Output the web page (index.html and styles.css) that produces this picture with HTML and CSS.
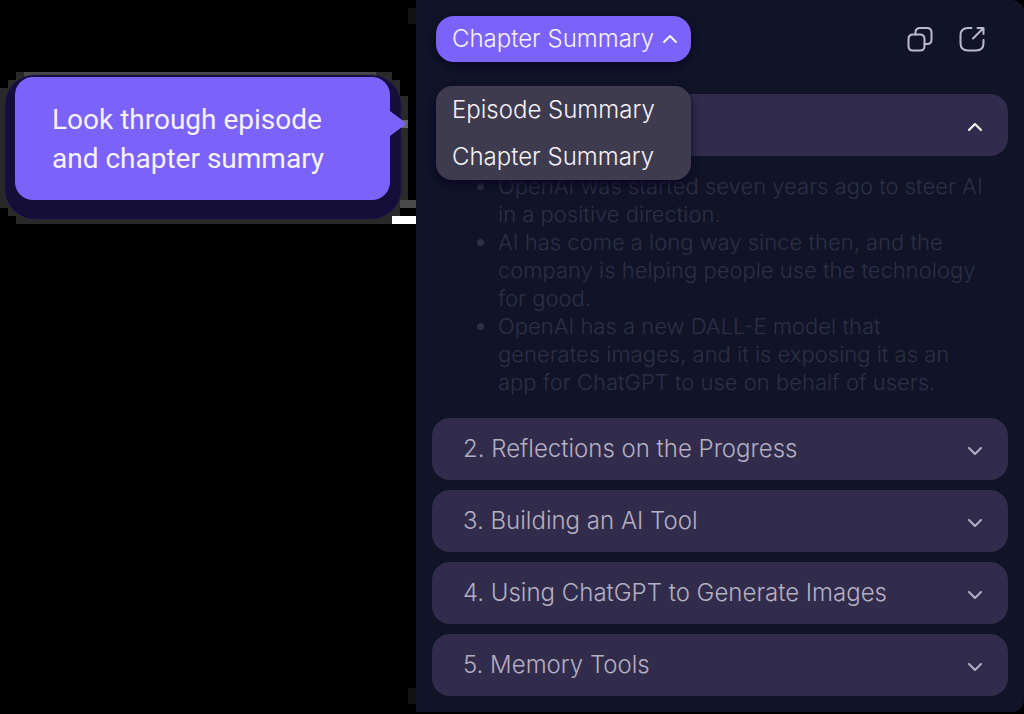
FILE: index.html
```html
<!DOCTYPE html>
<html lang="en">
<head>
<meta charset="utf-8">
<title>Chapter Summary</title>
<link rel="stylesheet" href="styles.css">
</head>
<body>
<main class="layout">
  <section class="intro">
    <svg class="halo" viewBox="0 0 416 712" aria-hidden="true">
      <path fill="#121212" d="M408 8H416V24H408ZM408 688H416V704H408Z"/>
      <path fill="#292929" d="M16 72H392V80H400V96H408V120H408V200H400V216H392V224H16V216H8V208H0V88H8V80H16Z"/>
      <path fill="#474747" d="M24 72H376V80H24Z"/>
      <path fill="#666" d="M400 120H408V128H400Z"/>
      <path fill="#4a4a4a" d="M400 200H416V208H400Z"/>
      <rect x="5" y="75" width="396" height="144" rx="30" fill="#150e38" stroke="#211c60" stroke-dasharray="3 2 1 2"/>
      <path fill="#fff" d="M392 216H416V224H392Z"/>
      <path fill="#7b62f9" d="M388 109L390 111L402 120Q409 124 402 127L390 136H388Z"/>
    </svg>
    <p class="callout">Look through episode<br>and chapter summary</p>
  </section>

  <section class="panel">
    <header class="toolbar">
      <div class="picker">
        <button class="picker-button" type="button" aria-expanded="true" aria-haspopup="menu">Chapter Summary
          <svg class="chevron" viewBox="0 0 16 10" aria-hidden="true"><path d="M2 8L8 2L14 8"/></svg>
        </button>
        <div class="menu" role="menu">
          <button class="menu-item" type="button" role="menuitem">Episode Summary</button>
          <button class="menu-item" type="button" role="menuitem">Chapter Summary</button>
        </div>
      </div>
      <div class="actions">
        <button class="icon-button" type="button" aria-label="Copy">
          <svg viewBox="0 0 28 28" aria-hidden="true"><path d="M2.500 14Q2.500 9.500 7 9.500H14Q18.500 9.500 18.500 14V21Q18.500 25.500 14 25.500H7Q2.500 25.500 2.500 21Z"/><path d="M9.500 9.500V7.500Q9.500 3 14 3H21Q25.500 3 25.500 7.500V14.500Q25.500 19 21 19H18.500"/></svg>
        </button>
        <button class="icon-button" type="button" aria-label="Open in new window">
          <svg viewBox="0 0 28 28" aria-hidden="true"><path d="M13.500 3H10Q2.500 3 2.500 10.500V18Q2.500 25.500 10 25.500H18Q25.500 25.500 25.500 18V15"/><path d="M15 13.500L25 3.500M19.500 3H25.500V9"/></svg>
        </button>
      </div>
    </header>

    <div class="chapters">
      <div class="chapter-open">
        <button class="chapter active" type="button" aria-expanded="true" aria-label="Collapse chapter">
          <span></span>
          <svg class="chevron" viewBox="0 0 16 10" aria-hidden="true"><path d="M2 8L8 2L14 8"/></svg>
        </button>
        <ul class="points">
          <li>OpenAI was started seven years ago to steer AI in a positive direction.</li>
          <li>AI has come a long way since then, and the company is helping people use the technology for good.</li>
          <li>OpenAI has a new DALL-E model that generates images, and it is exposing it as an app for ChatGPT to use on behalf of users.</li>
        </ul>
      </div>
      <button class="chapter" type="button"><span>2. Reflections on the Progress</span><svg class="chevron" viewBox="0 0 16 10" aria-hidden="true"><path d="M2 2L8 8L14 2"/></svg></button>
      <button class="chapter" type="button"><span>3. Building an AI Tool</span><svg class="chevron" viewBox="0 0 16 10" aria-hidden="true"><path d="M2 2L8 8L14 2"/></svg></button>
      <button class="chapter" type="button"><span>4. Using ChatGPT to Generate Images</span><svg class="chevron" viewBox="0 0 16 10" aria-hidden="true"><path d="M2 2L8 8L14 2"/></svg></button>
      <button class="chapter" type="button"><span>5. Memory Tools</span><svg class="chevron" viewBox="0 0 16 10" aria-hidden="true"><path d="M2 2L8 8L14 2"/></svg></button>
    </div>
  </section>
</main>
</body>
</html>
```
FILE: styles.css
```css
* {
  box-sizing: border-box;
}

body {
  margin: 0;
  background: #000;
  font-family: Inter, "Liberation Sans", sans-serif;
  font-weight: 300;
}

button {
  border: 0;
  font: inherit;
  cursor: pointer;
}

.layout {
  display: grid;
  grid-template-columns: 13fr 19fr;
}

.intro {
  position: relative;
  padding: 77px 26px 0 15px;
}

.halo {
  position: absolute;
  top: 0;
  left: 0;
  width: 100%;
}

.callout {
  position: relative;
  margin: 0;
  padding: 23px 36px 22px 37px;
  border-radius: 18px;
  background: #7b62f9;
  color: #f6f3ff;
  font-family: Roboto, sans-serif;
  font-size: 28px;
  font-weight: 400;
  line-height: 39px;
  white-space: nowrap;
}

.panel {
  padding: 16px;
  border-radius: 0 12px 12px 0;
  background: #101426;
}

.toolbar {
  display: flex;
  align-items: center;
  justify-content: space-between;
  padding: 0 22px 0 4px;
}

.picker {
  position: relative;
}

.picker-button {
  display: flex;
  align-items: center;
  gap: 8px;
  padding: 0 13px 0 16px;
  border-radius: 18px;
  background: #7b62f9;
  box-shadow: 0 4px 8px #0a0624;
  color: #f6f3ff;
  font-size: 24px;
  line-height: 46px;
  white-space: nowrap;
}

.menu {
  position: absolute;
  top: 70px;
  left: 0;
  z-index: 1;
  width: 100%;
  border-radius: 16px;
  background: #3f3b4e;
  box-shadow: 0 4px 8px #0a0624;
}

.menu-item {
  display: block;
  width: 100%;
  padding: 0 16px;
  background: none;
  color: #f4f2f8;
  font-size: 24px;
  line-height: 47px;
  text-align: left;
  white-space: nowrap;
}

.actions {
  display: flex;
  gap: 24px;
}

.icon-button {
  width: 28px;
  height: 28px;
  padding: 0;
  background: none;
  color: #bcb8cf;
}

.icon-button svg {
  display: block;
  fill: none;
  stroke: currentColor;
  stroke-width: 2;
  stroke-linecap: round;
  stroke-linejoin: round;
}

.chevron {
  flex: none;
  width: 16px;
  height: 10px;
  fill: none;
  stroke: currentColor;
  stroke-width: 2;
  stroke-linecap: round;
  stroke-linejoin: round;
}

.chapters {
  display: grid;
  gap: 10px;
  padding-top: 32px;
}

.chapter {
  display: flex;
  align-items: center;
  justify-content: space-between;
  width: 100%;
  min-height: 62px;
  padding: 4px 25px 4px 31px;
  border-radius: 18px;
  background: #312c4c;
  color: #b4afc2;
  font-size: 24px;
  line-height: 32px;
  text-align: left;
}

.chapter.active {
  width: calc(100% - 16px);
  margin-left: 16px;
  color: #fff;
}

.chapter .chevron {
  margin-top: 4px;
}

.points {
  margin: 0;
  padding: 16px 22px 12px 66px;
  color: #2d2f44;
  font-size: 22px;
  line-height: 28px;
}
```
